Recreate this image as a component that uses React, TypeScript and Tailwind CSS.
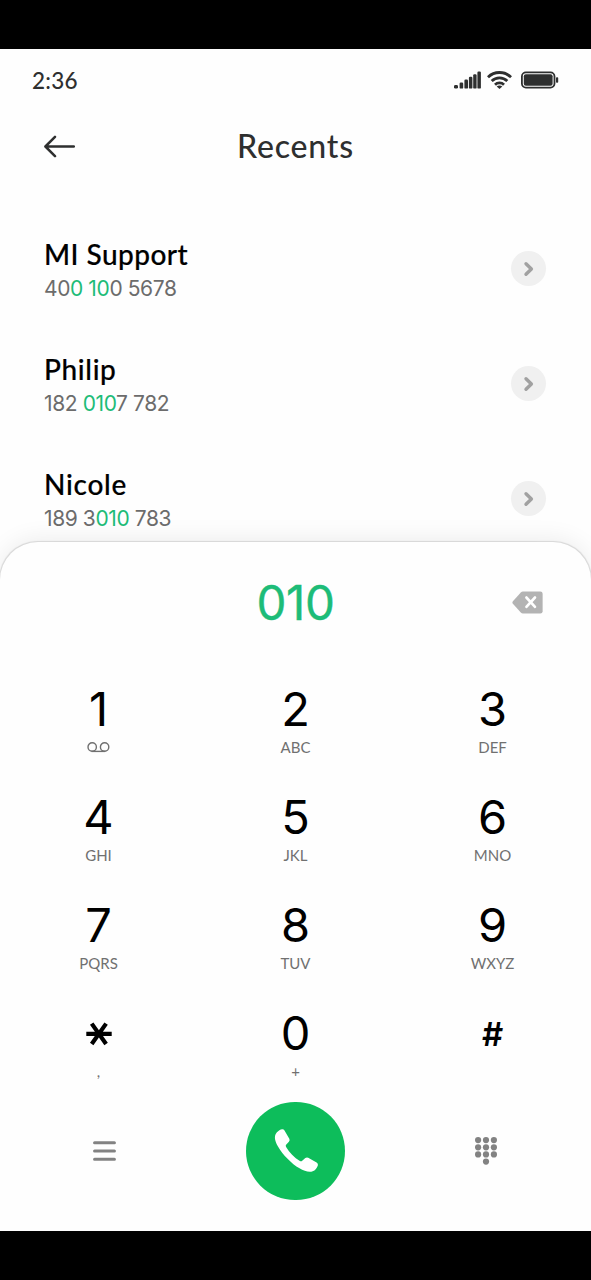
import { useState } from "react";

type Contact = {
  name: string;
  // number split into chunks, matched ones are highlighted
  number: { text: string; match?: boolean }[];
  nameClass: string;
};

const contacts: Contact[] = [
  {
    name: "MI Support",
    number: [{ text: "40" }, { text: "0 10", match: true }, { text: "0 5678" }],
    nameClass: "tracking-[0.45px]",
  },
  {
    name: "Philip",
    number: [{ text: "182 " }, { text: "010", match: true }, { text: "7 782" }],
    nameClass: "tracking-[0.65px]",
  },
  {
    name: "Nicole",
    number: [{ text: "189 3" }, { text: "010", match: true }, { text: " 783" }],
    nameClass: "tracking-[0.75px]",
  },
];

const keys = [
  { digit: "1", label: "" },
  { digit: "2", label: "ABC" },
  { digit: "3", label: "DEF" },
  { digit: "4", label: "GHI" },
  { digit: "5", label: "JKL" },
  { digit: "6", label: "MNO" },
  { digit: "7", label: "PQRS" },
  { digit: "8", label: "TUV" },
  { digit: "9", label: "WXYZ" },
  { digit: "*", label: "," },
  { digit: "0", label: "+" },
  { digit: "#", label: "" },
];

function StatusIcons() {
  return (
    <div className="flex items-center">
      <svg width="27" height="18" viewBox="0 0 27 18" fill="#2e2f2f">
        <rect x="0" y="14" width="4" height="3.6" rx="1.4" />
        <rect x="5.6" y="11.6" width="3.6" height="6" rx="1.2" />
        <rect x="10.4" y="8.6" width="3.6" height="9" rx="1.2" />
        <rect x="14.9" y="5.8" width="3.5" height="11.8" rx="1.2" />
        <rect x="19.2" y="3.2" width="3.4" height="14.4" rx="1.2" />
        <rect x="23.4" y="0.6" width="3.5" height="17" rx="1.2" />
      </svg>
      <svg className="ml-[6px]" width="25" height="18" viewBox="0 0 25 18" fill="none" stroke="#2e2f2f" strokeWidth="2.8">
        <path d="M1 6.2a16.4 16.4 0 0 1 23 0" />
        <path d="M4.7 10a11.1 11.1 0 0 1 15.6 0" />
        <path d="M8 13.7a6.4 6.4 0 0 1 9 0" />
        <path d="M9.7 15.6a3.9 3.9 0 0 1 5.6 0L12.5 18Z" fill="#2e2f2f" stroke="none" />
      </svg>
      <svg className="ml-[9px]" width="38" height="18" viewBox="0 0 38 18">
        <rect x="0.9" y="1.4" width="32.6" height="15.2" rx="4" fill="none" stroke="#2e2f2f" strokeWidth="1.8" />
        <rect x="2.8" y="3.3" width="28.8" height="11.4" rx="2" fill="#2e2f2f" />
        <rect x="35" y="6.3" width="2.2" height="5.4" rx="0.8" fill="#2e2f2f" />
      </svg>
    </div>
  );
}

function KeySymbol({ digit }: { digit: string }) {
  if (digit === "*") {
    return (
      <svg className="shrink-0" width="26" height="24" viewBox="0 0 26 24" stroke="#000" strokeWidth="4.2">
        <path d="M0.3 11.8h25.4M5.7 1.6l14.4 20.4M20.1 1.6L5.7 22" />
      </svg>
    );
  }
  return <>{digit}</>;
}

export default function App() {
  const [value, setValue] = useState("010");

  return (
    <div className="w-[591px] h-[1280px] bg-black py-[49px] overflow-hidden font-['Inter','Liberation_Sans',sans-serif]">
      <div className="h-[1182px] flex flex-col bg-[#fefefe] overflow-hidden">
        {/* Status bar */}
        <div className="h-[62px] shrink-0 flex items-center justify-between pl-8 pr-8">
          <span className="text-[22.5px] leading-none pt-[3px] font-medium tracking-[0.25px] text-[#2e2f2f] font-['Lato','Liberation_Sans',sans-serif]">2:36</span>
          <StatusIcons />
        </div>

        {/* Header */}
        <div className="h-[70px] shrink-0 grid grid-cols-3 items-center px-11">
          <button type="button" aria-label="Back">
            <svg width="31" height="23" viewBox="0 0 31 23" fill="none" stroke="#2e2f2f" strokeWidth="2.5" strokeLinecap="round" strokeLinejoin="round">
              <path d="M11 1.8L1.4 11.5L11 21.2M1.6 11.5H29.8" />
            </svg>
          </button>
          <h1 className="pb-px text-center text-[32px] leading-9 font-medium tracking-[0.8px] text-[#2e2f2f] font-['Lato','Liberation_Sans',sans-serif]">Recents</h1>
        </div>

        {/* Matching calls */}
        <div className="h-[361px] shrink-0 pt-[30px]">
          {contacts.map((c) => (
            <div key={c.name} className="h-[115px] flex items-center justify-between pl-11 pr-[45px]">
              <div className="pt-[3px]">
                <div className={`text-[28px] leading-9 font-medium text-black [-webkit-text-stroke:0.2px_#000] font-['Lato','Liberation_Sans',sans-serif] ${c.nameClass}`}>{c.name}</div>
                <div className="mt-[2px] text-[21px] leading-[30px] tracking-[-0.4px] text-[#6c6c6c]">
                  {c.number.map((part, i) => (
                    <span key={i} className={part.match ? "text-[#1dbc78]" : ""}>{part.text}</span>
                  ))}
                </div>
              </div>
              <button type="button" aria-label={`Details for ${c.name}`} className="w-[35px] h-[35px] rounded-full bg-[#f0f0f0] flex items-center justify-center">
                <svg width="11" height="16" viewBox="0 0 11 16" fill="none" stroke="#a1a1a1" strokeWidth="3.4" strokeLinecap="round" strokeLinejoin="round">
                  <path d="M3 2.7L8.4 8L3 13.3" />
                </svg>
              </button>
            </div>
          ))}
        </div>

        {/* Dialer sheet */}
        <div className="relative grow bg-[#fefefe] rounded-t-[38px] shadow-[0_0_1px_0.5px_rgba(0,0,0,0.12),0_-2px_24px_rgba(0,0,0,0.08)]">
          <div className="h-[121px] grid grid-cols-[1fr_auto_1fr] items-center px-12">
            <div className="col-start-2 pt-px text-[47.5px] leading-none tracking-[-0.4px] text-[#1dbc78] [-webkit-text-stroke:0.4px_#1dbc78]">{value}</div>
            <button type="button" aria-label="Delete digit" className="justify-self-end pb-px" onClick={() => setValue(value.slice(0, -1))}>
              <svg width="31" height="23" viewBox="0 0 31 23">
                <path d="M11 0.5H28.3Q30.6 0.5 30.6 2.8V20.2Q30.6 22.5 28.3 22.5H11Q9.7 22.5 8.8 21.6L0.9 12.8Q-0.2 11.5 0.9 10.2L8.8 1.4Q9.7 0.5 11 0.5Z" fill="#b3b3b3" />
                <path d="M14.4 6.5L23 15.9M23 6.5L14.4 15.9" stroke="#fff" strokeWidth="2.6" strokeLinecap="round" />
              </svg>
            </button>
          </div>

          <div className="grid grid-cols-3">
            {keys.map((k) => (
              <button key={k.digit} type="button" className="h-[108.2px] flex flex-col items-center pt-[22px]" onClick={() => setValue(value + k.digit)}>
                <span className={`h-[48px] flex items-center text-black ${k.digit === "#" ? "text-[33px] font-semibold pt-[2px]" : "text-[47px]"}`}>
                  <KeySymbol digit={k.digit} />
                </span>
                <span className="mt-1 h-5 flex items-center text-[15px] text-[#707070] font-['Lato','Liberation_Sans',sans-serif]">
                  {k.digit === "1" ? (
                    <svg width="23" height="11" viewBox="0 0 23 11" fill="none" stroke="#707070" strokeWidth="1.4">
                      <circle cx="5.2" cy="5" r="4.2" />
                      <circle cx="17.6" cy="5" r="4.2" />
                      <path d="M4.5 9.4H18.3" />
                    </svg>
                  ) : (
                    k.label
                  )}
                </span>
              </button>
            ))}
          </div>

          {/* Bottom actions */}
          <div className="mt-[6px] h-[98px] flex items-center justify-between pl-[93px] pr-[94px]">
            <button type="button" aria-label="Menu">
              <svg width="23" height="20" viewBox="0 0 23 20" stroke="#828282" strokeWidth="3.1" strokeLinecap="round">
                <path d="M1.6 1.7H21.4M1.6 10H21.4M1.6 18.3H21.4" />
              </svg>
            </button>
            <button type="button" aria-label="Call" className="w-[99px] h-[98px] rounded-full bg-[#0dbd5b] flex items-center justify-center">
              <svg className="ml-[2px]" width="45" height="45" viewBox="0 0 45 45" fill="#fff">
                <path d="M1.6 6.2C3.2 3.5 5.5 1.8 7.9 1.3Q9.6 1 10.5 2.5L15.3 10.8Q16.2 12.5 14.9 13.8L12.1 16.8Q11.3 17.8 12.1 19.1C15.2 24.7 20.3 29.8 25.9 33Q27.2 33.7 28.2 32.8L31.3 30.1Q32.6 28.9 34.2 29.7L42.6 34.4Q44.3 35.4 43.9 37.2C43 40.1 41.2 42.3 38.7 43.3C35.2 44.7 30.2 43.1 25.5 40.3C17.4 35.4 9 27.1 4 18.4C1.2 13.5 0.1 9.3 1.6 6.2Z" />
              </svg>
            </button>
            <button type="button" aria-label="Hide keypad">
              <svg width="22" height="28" viewBox="0 0 22 28" fill="#828282">
                {[3.1, 10.3, 17.4].map((cy) =>
                  [3.1, 11, 18.9].map((cx) => <circle key={`${cx}-${cy}`} cx={cx} cy={cy} r="3.1" />)
                )}
                <circle cx="11" cy="24.6" r="3.1" />
              </svg>
            </button>
          </div>
        </div>
      </div>
    </div>
  );
}
